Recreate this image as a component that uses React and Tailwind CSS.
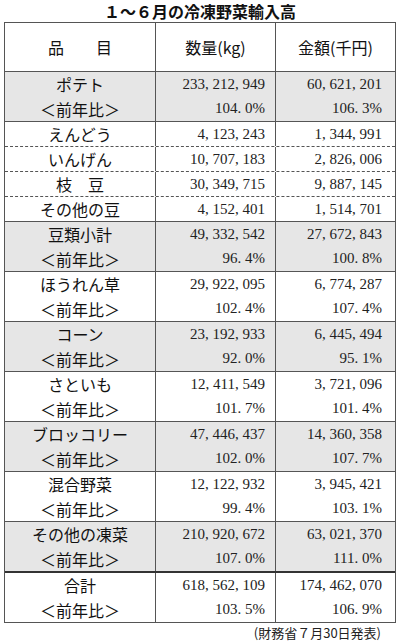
const rows = [
  { name: 'ポテト', kg: '233,212,949', yen: '60,621,201', kgp: '104.0%', yenp: '106.3%', gray: true },
  { name: 'えんどう', kg: '4,123,243', yen: '1,344,991', dash: true },
  { name: 'いんげん', kg: '10,707,183', yen: '2,826,006', dash: true },
  { name: '枝　豆', kg: '30,349,715', yen: '9,887,145', dash: true },
  { name: 'その他の豆', kg: '4,152,401', yen: '1,514,701' },
  { name: '豆類小計', kg: '49,332,542', yen: '27,672,843', kgp: '96.4%', yenp: '100.8%', gray: true },
  { name: 'ほうれん草', kg: '29,922,095', yen: '6,774,287', kgp: '102.4%', yenp: '107.4%' },
  { name: 'コーン', kg: '23,192,933', yen: '6,445,494', kgp: '92.0%', yenp: '95.1%', gray: true },
  { name: 'さといも', kg: '12,411,549', yen: '3,721,096', kgp: '101.7%', yenp: '101.4%' },
  { name: 'ブロッコリー', kg: '47,446,437', yen: '14,360,358', kgp: '102.0%', yenp: '107.7%', gray: true },
  { name: '混合野菜', kg: '12,122,932', yen: '3,945,421', kgp: '99.4%', yenp: '103.1%' },
  { name: 'その他の凍菜', kg: '210,920,672', yen: '63,021,370', kgp: '107.0%', yenp: '111.0%', gray: true, thick: true },
  { name: '合計', kg: '618,562,109', yen: '174,462,070', kgp: '103.5%', yenp: '106.9%', last: true },
];

const sans = { fontFamily: '"Noto Sans CJK JP", "Noto Sans", sans-serif' };

// mincho-like numbers: punctuation takes a full digit cell
function Num({ v }) {
  return (
    <span className="font-['Liberation_Serif',serif] text-[15px] text-[#222]">
      {v.split('').map((c, i) =>
        c === ',' || c === '.' ? (
          <span key={i} className="inline-block w-[7.5px] text-left">{c}</span>
        ) : (
          <span key={i}>{c}</span>
        )
      )}
    </span>
  );
}

function Row({ r }) {
  const double = !!r.kgp;
  const line = double ? 'h-[24.5px] flex items-center' : 'h-[24px] flex items-center';
  let border = 'border-b border-[#555]';
  if (r.dash) border = 'border-b border-dashed border-[#555]';
  if (r.thick) border = 'border-b-2 border-[#333]';
  if (r.last) border = '';
  return (
    <div className={`grid grid-cols-[151px_120px_119px] ${r.gray ? 'bg-[#e6e6e6]' : 'bg-white'} ${border}`}>
      <div className="border-r border-[#555] flex flex-col items-center text-[16px] leading-none text-[#111]" style={sans}>
        <div className={line}>{r.name}</div>
        {double && <div className={line}>＜前年比＞</div>}
      </div>
      <div className="border-r border-[#555] flex flex-col items-end pr-[10px] leading-none">
        <div className={line}><Num v={r.kg} /></div>
        {double && <div className={line}><Num v={r.kgp} /></div>}
      </div>
      <div className="flex flex-col items-end pr-[13px] leading-none">
        <div className={line}><Num v={r.yen} /></div>
        {double && <div className={line}><Num v={r.yenp} /></div>}
      </div>
    </div>
  );
}

export default function App() {
  return (
    <div className="w-[400px] h-[641px] bg-white">
      <div className="h-[22px] flex items-center justify-center text-[16px] font-bold leading-none text-[#111]" style={sans}>
        １～６月の冷凍野菜輸入高
      </div>
      <div className="ml-[4px] w-[392px] border border-[#555]">
        <div className="grid grid-cols-[151px_120px_119px] h-[49px] border-b border-[#555] text-[16px] text-[#111]" style={sans}>
          <div className="border-r border-[#555] flex items-center justify-center">品　　目</div>
          <div className="border-r border-[#555] flex items-center justify-center">数量(kg)</div>
          <div className="flex items-center justify-center">金額(千円)</div>
        </div>
        {rows.map((r, i) => (
          <Row key={i} r={r} />
        ))}
      </div>
      <div className="pt-[3px] pr-[19px] text-right text-[13px] leading-none text-[#222]" style={sans}>
        (財務省７月30日発表)
      </div>
    </div>
  );
}
